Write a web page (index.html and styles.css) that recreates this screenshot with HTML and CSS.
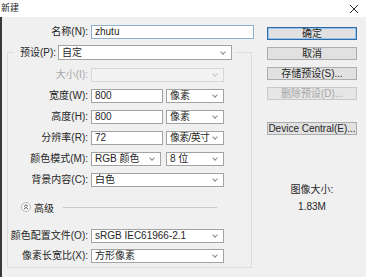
FILE: index.html
```html
<!DOCTYPE html>
<html lang="zh-CN">
<head>
  <meta charset="UTF-8">
  <title>新建</title>
  <link rel="stylesheet" href="styles.css">
</head>
<body>
  <div class="dialog">
    <div class="titlebar">
      <span class="title">新建</span>
      <svg class="close" width="10" height="10" viewBox="0 0 10 10">
        <path d="M1 1L9 9M9 1L1 9" stroke="#333" stroke-width="1" fill="none"/>
      </svg>
    </div>

    <div class="content">
      <div class="left">
        <div class="name-row">
          <label>名称(N):</label>
          <div class="field focus">zhutu</div>
        </div>

        <fieldset class="group">
          <legend>
            <label>预设(P):</label>
            <div class="select preset"><span>自定</span><i class="chev"></i></div>
          </legend>

          <div class="group-body">
            <div class="row">
              <label class="off">大小(I):</label>
              <div class="select full off"><span></span><i class="chev"></i></div>
            </div>
            <div class="row">
              <label>宽度(W):</label>
              <div class="field">800</div>
              <div class="select"><span>像素</span><i class="chev"></i></div>
            </div>
            <div class="row">
              <label>高度(H):</label>
              <div class="field">800</div>
              <div class="select"><span>像素</span><i class="chev"></i></div>
            </div>
            <div class="row">
              <label>分辨率(R):</label>
              <div class="field">72</div>
              <div class="select"><span class="tight">像素/英寸</span><i class="chev"></i></div>
            </div>
            <div class="row">
              <label>颜色模式(M):</label>
              <div class="select mode"><span>RGB 颜色</span><i class="chev"></i></div>
              <div class="select"><span>8 位</span><i class="chev"></i></div>
            </div>
            <div class="row">
              <label>背景内容(C):</label>
              <div class="select full"><span>白色</span><i class="chev"></i></div>
            </div>

            <div class="adv">
              <svg class="adv-icon" width="10" height="10" viewBox="0 0 10 10">
                <circle cx="5" cy="5" r="4.5" fill="#fafafa" stroke="#b4b4b4"/>
                <path d="M3 4.5L5 2.8L7 4.5M3 7L5 5.3L7 7" stroke="#444" stroke-width="0.9" fill="none"/>
              </svg>
              <span>高级</span>
              <div class="adv-line"></div>
            </div>

            <div class="row profile">
              <label>颜色配置文件(O):</label>
              <div class="select full"><span>sRGB IEC61966-2.1</span><i class="chev"></i></div>
            </div>
            <div class="row aspect">
              <label>像素长宽比(X):</label>
              <div class="select full"><span>方形像素</span><i class="chev"></i></div>
            </div>
          </div>
        </fieldset>
      </div>

      <div class="right">
        <div class="btn default">确定</div>
        <div class="btn">取消</div>
        <div class="btn">存储预设(S)...</div>
        <div class="btn disabled">删除预设(D)...</div>
        <div class="btn central">Device Central(E)...</div>

        <div class="size-label">图像大小:</div>
        <div class="size-value">1.83M</div>
      </div>
    </div>
  </div>
</body>
</html>
```

FILE: styles.css
```css
/* styles.css */
body {
  margin: 0;
  font-family: "Liberation Sans", "Noto Sans CJK SC", sans-serif;
  font-size: 10px;
  color: #262626;
  background: #f0f0f0;
}

.dialog {
  width: 366px;
  height: 277px;
  background: #f0f0f0;
  display: flex;
  flex-direction: column;
  overflow: hidden;
}

.titlebar {
  height: 17px;
  flex: none;
  background: #fff;
  display: flex;
  align-items: center;
  justify-content: space-between;
  padding: 0 7px 0 1px;
}

.title {
  font-size: 9px;
  line-height: 17px;
}

.content {
  flex: 1;
  display: flex;
  gap: 13px;
  padding: 8px 0 0 5px;
  border-left: 2px solid #383838;
}

.left {
  width: 247px;
  display: flex;
  flex-direction: column;
}

label {
  text-align: right;
  white-space: nowrap;
  line-height: 14px;
}

label.off {
  color: #a8a8a8;
}

.name-row {
  display: grid;
  grid-template-columns: 81px 163px;
  column-gap: 3px;
  height: 14px;
  align-items: center;
}

.field,
.select {
  box-sizing: border-box;
  height: 14px;
  border: 1px solid #a3a3a3;
  background: #fff;
  padding: 0 3px;
  line-height: 12px;
  display: flex;
  align-items: center;
  white-space: nowrap;
  overflow: hidden;
}

.field.focus {
  border-color: #8eb0d2;
}

.select {
  justify-content: space-between;
}

.select.off {
  background: #f2f2f2;
  border-color: #d8d8d8;
}

.tight {
  letter-spacing: -0.7px;
}

.chev {
  flex: none;
  width: 3px;
  height: 3px;
  border-right: 1px solid #8a8a8a;
  border-bottom: 1px solid #8a8a8a;
  transform: rotate(45deg);
  margin: 0 3px 2px 2px;
}

.select.off .chev {
  border-color: #c4c4c4;
}

/* preset group box */
.group {
  margin: 6px 0 0 0;
  padding: 0 0 4px 0;
  width: 245px;
  box-sizing: border-box;
  border: 1px solid #dcdcdc;
  min-width: 0;
}

.group legend {
  margin-left: 6px;
  padding: 0 3px 0 0;
  display: flex;
  align-items: center;
  gap: 2px;
}

.group legend label {
  width: 42px;
}

.select.preset {
  width: 174px;
  height: 15px;
}

.group-body {
  padding-top: 8px;
  display: flex;
  flex-direction: column;
}

.row {
  display: grid;
  grid-template-columns: 80px 72px 58px;
  column-gap: 3px;
  height: 14px;
  align-items: center;
}

.row + .row {
  margin-top: 7px;
}

.select.full {
  grid-column: 2 / 4;
}

.select.mode {
  width: 70px;
}

.adv {
  display: flex;
  align-items: center;
  height: 14px;
  margin: 13px 34px 0 0;
  padding-left: 13px;
}

.adv-icon {
  flex: none;
  margin-right: 3px;
}

.adv-line {
  flex: 1;
  height: 1px;
  background: #cacaca;
  margin-left: 9px;
}

.row.profile {
  margin-top: 15px;
}

.row.aspect {
  margin-top: 6px;
}

/* right column */
.right {
  width: 90px;
  display: flex;
  flex-direction: column;
  padding-top: 2px;
}

.btn {
  box-sizing: border-box;
  height: 13px;
  border: 1px solid #adadad;
  background: #e1e1e1;
  text-align: center;
  line-height: 11px;
  white-space: nowrap;
}

.btn + .btn {
  margin-top: 7px;
}

.btn.default {
  border-color: #2c6cab;
  box-shadow: inset 0 0 0 1px #9cc1e6;
}

.btn.disabled {
  color: #a6a6a6;
  border-color: #c8c8c8;
  background: #e6e6e6;
}

.btn.central {
  margin-top: 22px;
}

.size-label {
  margin-top: 48px;
  text-align: center;
  line-height: 14px;
}

.size-value {
  margin-top: 3px;
  text-align: center;
  line-height: 14px;
}
```
